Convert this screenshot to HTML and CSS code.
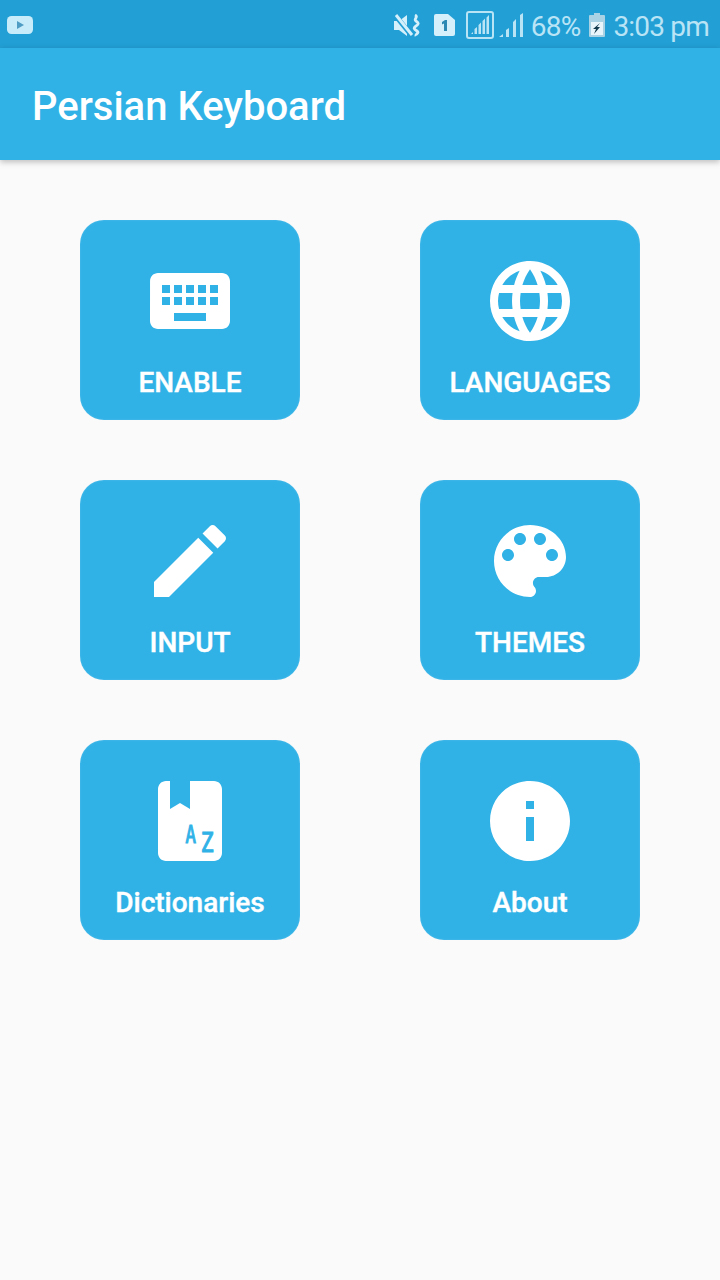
FILE: index.html
```html
<!DOCTYPE html>
<html lang="en">
<head>
    <meta charset="UTF-8">
    <meta name="viewport" content="width=device-width, initial-scale=1.0">
    <title>Persian Keyboard</title>
    <link rel="stylesheet" href="styles.css">
</head>
<body>

<div class="statusbar">
    <svg class="st-youtube" viewBox="0 0 26 18">
        <rect width="26" height="18" rx="4.5" fill="#c9ecfa"/>
        <path d="M10 5l7 4-7 4z" fill="#4f9cc4"/>
    </svg>
    <div class="st-right">
        <svg class="st-mute" viewBox="0 0 27 23">
            <path d="M0 7h5l8-6v21l-8-6H0z" fill="#d5effb"/>
            <path d="M1 1l17 21" stroke="#229fd5" stroke-width="5"/>
            <path d="M2 1l16 20" stroke="#d5effb" stroke-width="3"/>
            <path d="M21 1c4 2-2 4 1 6s3 3 0 5-2 3 1 5-2 3-1 5" fill="none" stroke="#d5effb" stroke-width="2.8"/>
        </svg>
        <svg class="st-sim" viewBox="0 0 21 22">
            <path d="M2 0h12l7 6v14a2 2 0 0 1-2 2H2a2 2 0 0 1-2-2V2a2 2 0 0 1 2-2z" fill="#d5effb"/>
            <path d="M8 8l3-2h2v11h-3V9.500l-2 1z" fill="#2c89b4"/>
        </svg>
        <svg class="st-box" viewBox="0 0 28 28">
            <rect x="1" y="1" width="26" height="26" rx="2" fill="none" stroke="#b9e4f6" stroke-width="2"/>
            <path d="M5 23l2-2v2zM8.500 23v-5l2.500-2v7zM12.500 23v-9l2.500-2.500V23zM16.500 23V10l2.500-2.500V23zM20.500 23V6.500L23 4v19z" fill="#b9e4f6"/>
        </svg>
        <svg class="st-signal" viewBox="0 0 25 24">
            <path d="M0 24l4-3v3zM7 24v-7l3-2v9zM14 24V9l3-3v18zM21 24V2l3-2v24z" fill="#b9e4f6"/>
        </svg>
        <span class="st-battery-text">68%</span>
        <svg class="st-battery" viewBox="0 0 16 24">
            <path d="M5 0h6v2h4a1 1 0 0 1 1 1v20a1 1 0 0 1-1 1H1a1 1 0 0 1-1-1V3a1 1 0 0 1 1-1h4z" fill="#a9d3e4"/>
            <rect x="2" y="9" width="12" height="13" fill="#e8f6fc"/>
            <path d="M11 10l-7 6h3l-2 5 6-7H8z" fill="#123a4d"/>
        </svg>
        <span class="st-time">3:03 pm</span>
    </div>
</div>

<header class="toolbar">
    <h1 class="toolbar-title">Persian Keyboard</h1>
</header>

<main class="menu">
    <a class="menu-item">
        <svg class="menu-icon" viewBox="0 0 24 24"><path d="M20 5H4c-1.100 0-1.990.9-1.990 2L2 17c0 1.100.9 2 2 2h16c1.100 0 2-.9 2-2V7c0-1.100-.9-2-2-2zm-9 3h2v2h-2V8zm0 3h2v2h-2v-2zM8 8h2v2H8V8zm0 3h2v2H8v-2zm-1 2H5v-2h2v2zm0-3H5V8h2v2zm9 7H8v-2h8v2zm0-4h-2v-2h2v2zm0-3h-2V8h2v2zm3 3h-2v-2h2v2zm0-3h-2V8h2v2z"/></svg>
        <span class="menu-label">ENABLE</span>
    </a>
    <a class="menu-item">
        <svg class="menu-icon" viewBox="0 0 24 24"><path d="M11.990 2C6.470 2 2 6.480 2 12s4.470 10 9.990 10C17.520 22 22 17.520 22 12S17.520 2 11.990 2zm6.930 6h-2.950c-.32-1.250-.78-2.450-1.380-3.560 1.840.63 3.370 1.910 4.330 3.560zM12 4.040c.83 1.200 1.480 2.530 1.910 3.960h-3.820c.43-1.430 1.080-2.760 1.910-3.960zM4.260 14C4.100 13.360 4 12.690 4 12s.1-1.360.26-2h3.380c-.08.66-.14 1.320-.14 2 0 .68.06 1.340.14 2H4.260zm.82 2h2.950c.32 1.250.78 2.450 1.380 3.560-1.840-.63-3.370-1.900-4.330-3.560zm2.950-8H5.080c.96-1.660 2.490-2.930 4.330-3.560C8.810 5.550 8.350 6.750 8.030 8zM12 19.960c-.83-1.200-1.480-2.530-1.910-3.960h3.820c-.43 1.430-1.080 2.760-1.910 3.960zM14.340 14H9.660c-.09-.66-.16-1.320-.16-2 0-.68.07-1.350.16-2h4.680c.09.65.16 1.320.16 2 0 .68-.07 1.340-.16 2zm.25 5.560c.6-1.110 1.060-2.310 1.380-3.560h2.950c-.96 1.650-2.490 2.930-4.330 3.560zM16.360 14c.08-.66.14-1.320.14-2 0-.68-.06-1.340-.14-2h3.380c.16.64.26 1.310.26 2s-.1 1.360-.26 2h-3.380z"/></svg>
        <span class="menu-label">LANGUAGES</span>
    </a>
    <a class="menu-item">
        <svg class="menu-icon" viewBox="0 0 24 24"><path d="M3 17.250V21h3.750L17.810 9.940l-3.750-3.750L3 17.250zM20.710 7.040c.39-.39.39-1.020 0-1.410l-2.340-2.340c-.39-.39-1.020-.39-1.410 0l-1.830 1.830 3.750 3.750 1.830-1.830z"/></svg>
        <span class="menu-label">INPUT</span>
    </a>
    <a class="menu-item">
        <svg class="menu-icon" viewBox="0 0 24 24"><path d="M12 3c-4.970 0-9 4.030-9 9s4.030 9 9 9c.83 0 1.500-.67 1.500-1.500 0-.39-.15-.74-.39-1.010-.23-.26-.38-.61-.38-.99 0-.83.67-1.500 1.500-1.500H16c2.760 0 5-2.240 5-5 0-4.420-4.030-8-9-8zm-5.500 9c-.83 0-1.500-.67-1.500-1.500S5.670 9 6.500 9 8 9.670 8 10.500 7.330 12 6.500 12zm3-4C8.670 8 8 7.330 8 6.500S8.670 5 9.500 5s1.500.67 1.500 1.500S10.330 8 9.500 8zm5 0c-.83 0-1.500-.67-1.500-1.500S13.670 5 14.500 5s1.500.67 1.500 1.500S15.330 8 14.500 8zm3 4c-.83 0-1.500-.67-1.500-1.500S16.670 9 17.500 9s1.500.67 1.500 1.500-.67 1.500-1.500 1.500z"/></svg>
        <span class="menu-label">THEMES</span>
    </a>
    <a class="menu-item">
        <svg class="menu-icon" viewBox="0 0 24 24">
            <path d="M18 2h-6v7l-2.500-1.500L7 9V2H6c-1.100 0-2 .9-2 2v16c0 1.100.9 2 2 2h12c1.100 0 2-.9 2-2V4c0-1.100-.9-2-2-2z"/>
            <text class="dict-letter" transform="translate(10.900 17.500) scale(.72 1)">A</text>
            <text class="dict-letter dict-letter-z" transform="translate(14.700 19.800) scale(.82 1)">Z</text>
        </svg>
        <span class="menu-label">Dictionaries</span>
    </a>
    <a class="menu-item">
        <svg class="menu-icon" viewBox="0 0 24 24"><path d="M12 2C6.480 2 2 6.480 2 12s4.480 10 10 10 10-4.480 10-10S17.520 2 12 2zm1 15h-2v-6h2v6zm0-8h-2V7h2v2z"/></svg>
        <span class="menu-label">About</span>
    </a>
</main>

</body>
</html>
```
FILE: styles.css
```css
body {
    margin: 0;
    background-color: #fafafa;
    font-family: 'Roboto', sans-serif;
}

/* status bar */
.statusbar {
    height: 48px;
    background-color: #229fd5;
    display: flex;
    align-items: center;
    justify-content: space-between;
    padding: 0 11px 0 7px;
    color: #b9e4f6;
}
.st-youtube {
    width: 26px;
    height: 18px;
    margin-top: 2px;
}
.st-right {
    display: flex;
    align-items: center;
    margin-top: 2px;
}
.st-mute {
    width: 27px;
    height: 23px;
    margin-right: 13px;
}
.st-sim {
    width: 21px;
    height: 22px;
    margin-right: 11px;
}
.st-box {
    width: 28px;
    height: 28px;
    margin-right: 5px;
}
.st-signal {
    width: 25px;
    height: 24px;
    margin-right: 7px;
}
.st-battery-text, .st-time {
    font-size: 28px;
    line-height: 44px;
    margin-top: 4px;
    letter-spacing: -0.8px;
}
.st-battery {
    width: 16px;
    height: 24px;
    margin: 0 8px 0 9px;
}

/* toolbar */
.toolbar {
    height: 112px;
    box-sizing: border-box;
    padding: 4px 0 0 32px;
    background-color: #31b2e7;
    box-shadow: 0 2px 6px rgba(0, 0, 0, 0.25);
    display: flex;
    align-items: center;
}
.toolbar-title {
    margin: 0;
    font-size: 40px;
    font-weight: 500;
    color: #fff;
}

/* menu */
.menu {
    display: grid;
    grid-template-columns: 220px 220px;
    justify-content: space-between;
    row-gap: 60px;
    padding: 60px 80px;
}
.menu-item {
    height: 200px;
    box-sizing: border-box;
    padding-top: 33px;
    border-radius: 24px;
    background-color: #31b2e7;
    box-shadow: inset 0 0 2px rgba(255, 255, 255, 0.2);
    display: flex;
    flex-direction: column;
    align-items: center;
}
.menu-icon {
    width: 96px;
    height: 96px;
    fill: #fff;
}
.menu-label {
    margin-top: 17px;
    font-size: 28px;
    line-height: 34px;
    font-weight: 500;
    color: #fff;
    -webkit-text-stroke: 0.4px #fff;
}
.dict-letter {
    font-family: 'DejaVu Sans Mono', monospace;
    font-size: 6px;
    fill: #31b2e7;
    stroke: #31b2e7;
    stroke-width: 0.3px;
}
.dict-letter-z {
    font-size: 6.5px;
}
```
